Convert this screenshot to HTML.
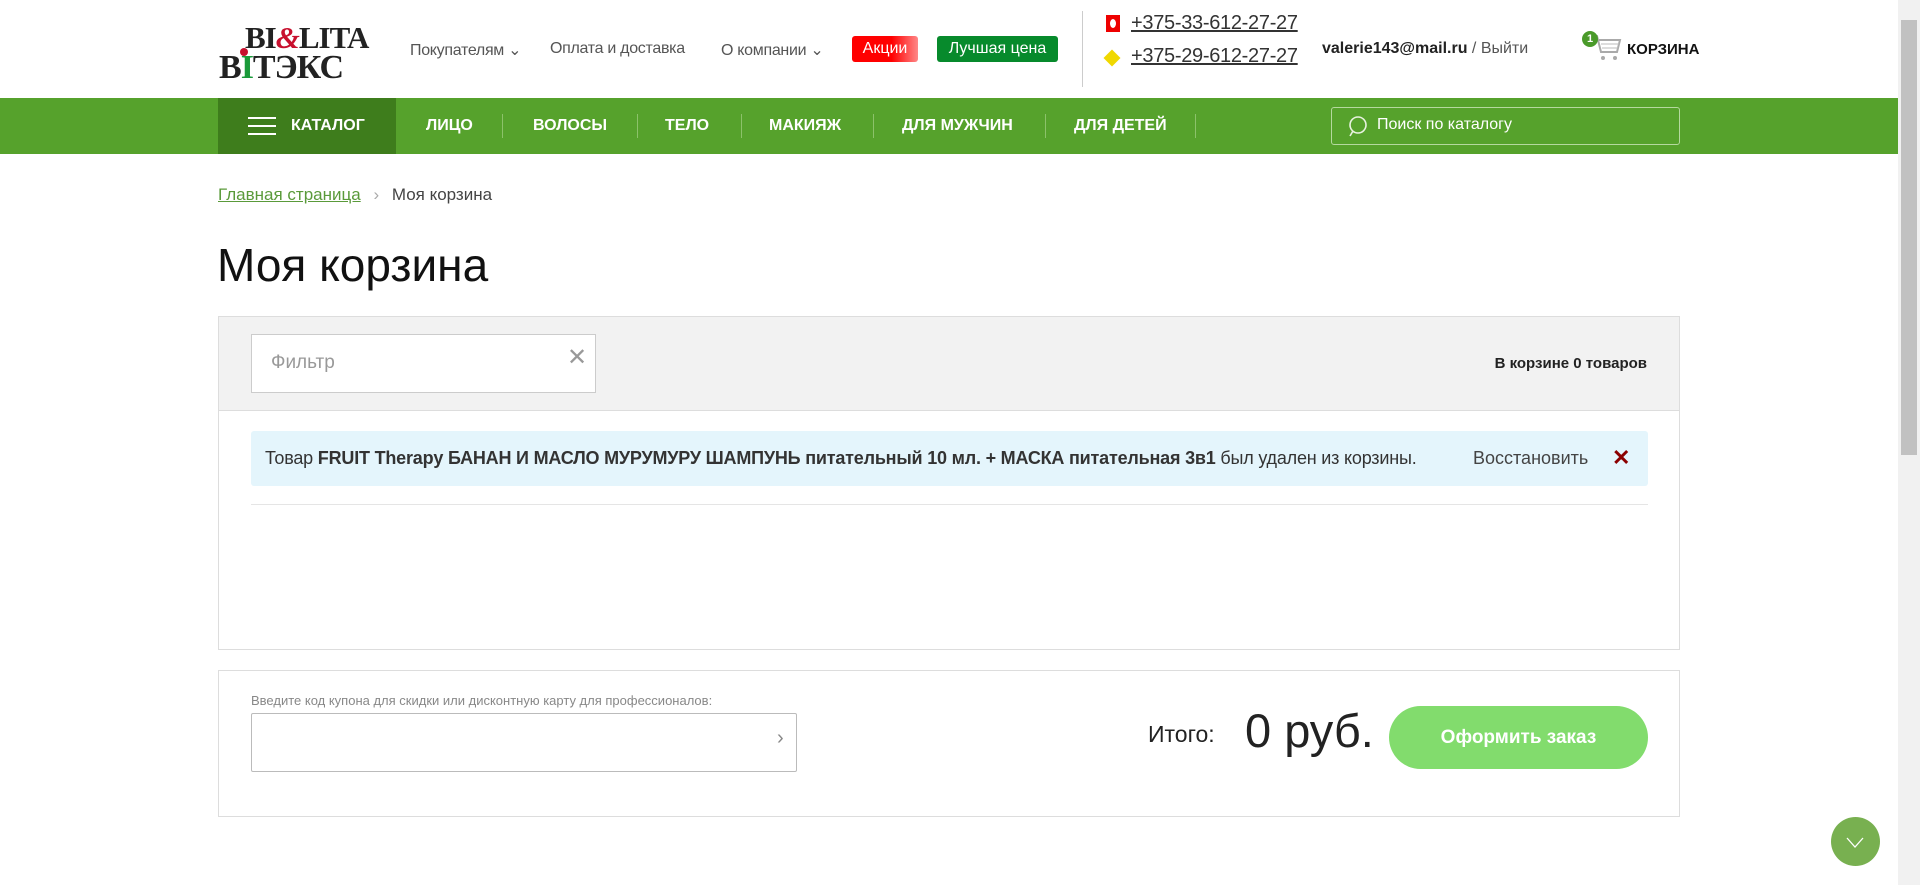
<!DOCTYPE html>
<html><head><meta charset="utf-8"><style>
*{box-sizing:border-box;margin:0;padding:0}
body{width:1920px;height:885px;overflow:hidden;background:#fff;font-family:"Liberation Sans",sans-serif;color:#333;position:relative}
.abs{position:absolute}
.scroll{position:absolute;right:0;top:0;width:22px;height:885px;background:#f1f1f1}
.scroll .th{position:absolute;left:3px;top:20px;width:16px;height:435px;background:#c1c1c1}
.menu{top:40px;font-size:16px;color:#555;letter-spacing:-0.3px}
.nav{top:98px;left:0;width:1898px;height:56px;background:#56a22c}
.nav .it{position:absolute;top:0;height:56px;line-height:56px;color:#fff;font-weight:bold;font-size:16px}
.nav .sep{position:absolute;top:16px;width:1px;height:24px;background:#8cc26a}
</style></head><body>
<div class="scroll"><div class="th"></div></div>
<!-- logo -->
<div class="abs" style="left:245px;top:20px;font-family:'Liberation Serif',serif;font-weight:bold;font-size:31px;color:#222;letter-spacing:-1px">BI<span style="color:#c8102e;font-style:italic">&amp;</span>LITA</div>
<div class="abs" style="left:219px;top:49px;font-family:'Liberation Serif',serif;font-weight:bold;font-size:34px;color:#222;letter-spacing:-1px">B<span style="color:#1a9a3a">I</span>ТЭКС</div>
<div class="abs" style="left:240px;top:48px;width:8px;height:8px;border-radius:50%;background:#c8102e"></div>
<div class="abs menu" style="left:410px">Покупателям ⌄</div>
<div class="abs menu" style="left:550px">Оплата и доставка</div>
<div class="abs menu" style="left:721px">О компании ⌄</div>
<div class="abs" style="left:852px;top:36px;width:66px;height:26px;background:linear-gradient(90deg,#f00 60%,#f88);border-radius:3px;color:#fff;font-size:16px;text-align:center;line-height:26px">Акции</div>
<div class="abs" style="left:937px;top:36px;width:121px;height:26px;background:#078a2c;border-radius:3px;color:#fff;font-size:16px;text-align:center;line-height:26px">Лучшая цена</div>
<div class="abs" style="left:1082px;top:11px;width:1px;height:76px;background:#ccc"></div>
<div class="abs" style="left:1106px;top:15px;width:14px;height:17px;background:#e00"><div style="margin:4px auto;width:6px;height:9px;border-radius:50%;background:#fff"></div></div>
<div class="abs" style="left:1131px;top:12px;font-size:20px;color:#333;text-decoration:underline;letter-spacing:-0.3px">+375-33-612-27-27</div>
<div class="abs" style="left:1106px;top:52px;width:12px;height:12px;background:#f0d800;transform:rotate(45deg)"></div>
<div class="abs" style="left:1131px;top:45px;font-size:20px;color:#333;text-decoration:underline;letter-spacing:-0.3px">+375-29-612-27-27</div>
<div class="abs" style="left:1322px;top:40px;font-size:16px"><b style="color:#222">valerie143@mail.ru</b> <span style="color:#555">/ Выйти</span></div>
<svg class="abs" style="left:1590px;top:32px" width="32" height="32" viewBox="0 0 32 32"><path d="M2 4h5l4 16h16l3-12H9" fill="none" stroke="#aaa" stroke-width="2"/><path d="M11 12h18M12 16h16" stroke="#bbb"/><circle cx="13" cy="26" r="2" fill="#aaa"/><circle cx="25" cy="26" r="2" fill="#aaa"/></svg>
<div class="abs" style="left:1582px;top:31px;width:16px;height:16px;border-radius:50%;background:#4a9a2a;color:#fff;font-size:11px;font-weight:bold;text-align:center;line-height:16px">1</div>
<div class="abs" style="left:1627px;top:41px;font-size:15px;font-weight:bold;color:#111">КОРЗИНА</div>
<!-- nav -->
<div class="abs nav">
<div class="abs" style="left:218px;top:0;width:178px;height:56px;background:#3e7d1c"></div>
<div class="abs" style="left:248px;top:19px;width:28px;height:2px;background:#fff;box-shadow:0 8px 0 #fff,0 16px 0 #fff"></div>
<div class="it" style="left:291px">КАТАЛОГ</div>
<div class="it" style="left:426px">ЛИЦО</div><div class="sep" style="left:502px"></div>
<div class="it" style="left:533px">ВОЛОСЫ</div><div class="sep" style="left:637px"></div>
<div class="it" style="left:665px">ТЕЛО</div><div class="sep" style="left:741px"></div>
<div class="it" style="left:769px">МАКИЯЖ</div><div class="sep" style="left:873px"></div>
<div class="it" style="left:902px">ДЛЯ МУЖЧИН</div><div class="sep" style="left:1045px"></div>
<div class="it" style="left:1074px">ДЛЯ ДЕТЕЙ</div><div class="sep" style="left:1195px"></div>
<div class="abs" style="left:1331px;top:9px;width:349px;height:38px;border:1px solid #b5d99f;border-radius:3px"></div>
<svg class="abs" style="left:1347px;top:17px" width="24" height="24" viewBox="0 0 24 24"><circle cx="11" cy="10" r="8" fill="none" stroke="#e8f2e0" stroke-width="1.6"/><path d="M6 16l-3 5" stroke="#e8f2e0" stroke-width="1.6"/></svg>
<div class="abs" style="left:1377px;top:18px;font-size:16px;color:#fff">Поиск по каталогу</div>
</div>
<!-- breadcrumb -->
<div class="abs" style="left:218px;top:185px;font-size:17px"><span style="color:#5a9a3a;text-decoration:underline">Главная страница</span> <span style="color:#aaa;margin:0 8px">›</span> <span style="color:#444">Моя корзина</span></div>
<div class="abs" style="left:217px;top:238px;font-size:46px;color:#111">Моя корзина</div>
<!-- box1 -->
<div class="abs" style="left:218px;top:316px;width:1462px;height:334px;border:1px solid #ddd">
<div style="height:94px;background:#f2f2f2;border-bottom:1px solid #ddd;position:relative">
<div class="abs" style="left:32px;top:17px;width:345px;height:59px;background:#fff;border:1px solid #ccc"></div>
<div class="abs" style="left:52px;top:35px;font-size:19px;color:#999">Фильтр</div>
<div class="abs" style="left:348px;top:26px;font-size:24px;color:#999">✕</div>
<div class="abs" style="right:32px;top:38px;font-size:15px;font-weight:bold;color:#222">В корзине 0 товаров</div>
</div>
<div class="abs" style="left:32px;top:114px;width:1397px;height:55px;background:#e4f5fc;border-radius:3px"></div>
<div class="abs" style="left:46px;top:131px;font-size:18px;color:#333;letter-spacing:-0.2px">Товар <b>FRUIT Therapy БАНАН И МАСЛО МУРУМУРУ ШАМПУНЬ питательный 10 мл. + МАСКА питательная 3в1</b> был удален из корзины.</div>
<div class="abs" style="left:1254px;top:131px;font-size:18px;color:#444">Восстановить</div>
<div class="abs" style="left:1393px;top:128px;font-size:22px;color:#8b0000;font-weight:bold">✕</div>
<div class="abs" style="left:32px;top:187px;width:1397px;height:1px;background:#e5e5e5"></div>
</div>
<!-- box2 -->
<div class="abs" style="left:218px;top:670px;width:1462px;height:147px;border:1px solid #ddd">
<div class="abs" style="left:32px;top:22px;font-size:13px;color:#888">Введите код купона для скидки или дисконтную карту для профессионалов:</div>
<div class="abs" style="left:32px;top:42px;width:546px;height:59px;border:1px solid #bbb;border-radius:2px"></div>
<div class="abs" style="left:558px;top:56px;font-size:20px;color:#888">›</div>
<div class="abs" style="left:929px;top:50px;font-size:23px;color:#222">Итого:</div>
<div class="abs" style="left:1026px;top:32px;font-size:47px;color:#222">0 руб.</div>
<div class="abs" style="left:1170px;top:35px;width:259px;height:63px;border-radius:32px;background:#82dc6d;color:#fff;font-weight:bold;font-size:19px;text-align:center;line-height:63px">Оформить заказ</div>
</div>
<div class="abs" style="left:1831px;top:817px;width:49px;height:49px;border-radius:50%;background:#78b050"></div>
<svg class="abs" style="left:1843px;top:830px" width="24" height="24"><path d="M4 8l8 9 8-9" fill="none" stroke="#fff" stroke-width="1.3"/></svg>
</body></html>
